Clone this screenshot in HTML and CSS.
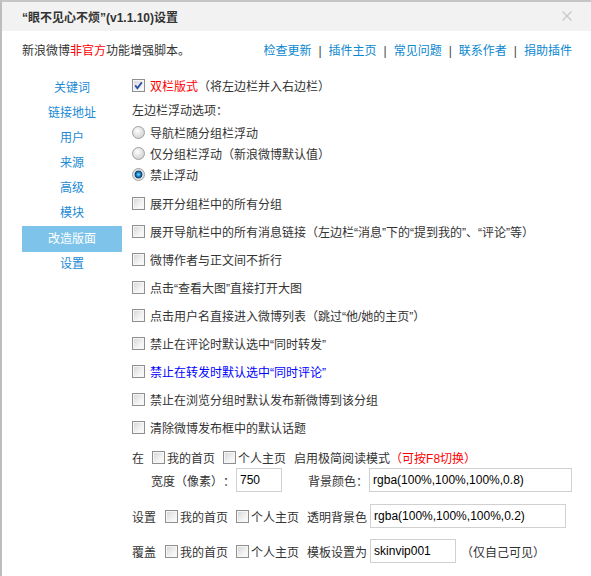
FILE: index.html
```html
<!DOCTYPE html>
<html lang="zh-CN">
<head>
  <meta charset="UTF-8">
  <meta name="viewport" content="width=device-width, initial-scale=1.0">
  <title>“眼不见心不烦”设置</title>
  <link rel="stylesheet" href="styles.css">
</head>
<body>
  <div class="dialog">
    <div class="dialog-head">
      <span class="dialog-title">“眼不见心不烦”(v1.1.10)设置</span>
      <span class="dialog-close">
        <svg width="10" height="10" viewBox="0 0 10 10"><path d="M0.5 0.5L9.5 9.5M9.5 0.5L0.5 9.5" stroke="#c9c9c9" stroke-width="1.4"/></svg>
      </span>
    </div>

    <div class="dialog-intro">
      <span>新浪微博<span class="red">非官方</span>功能增强脚本。</span>
      <span class="links">
        <a href="#">检查更新</a><i>|</i><a href="#">插件主页</a><i>|</i><a href="#">常见问题</a><i>|</i><a href="#">联系作者</a><i>|</i><a href="#">捐助插件</a>
      </span>
    </div>

    <div class="dialog-body">
      <ul class="tabs">
        <li>关键词</li>
        <li>链接地址</li>
        <li>用户</li>
        <li>来源</li>
        <li>高级</li>
        <li>模块</li>
        <li class="current">改造版面</li>
        <li>设置</li>
      </ul>

      <div class="pane">
        <div class="row">
          <span class="box"><svg width="9" height="9" viewBox="0 0 9 9"><path d="M1.2 4.4L3.4 7.2L7.8 1.4" fill="none" stroke="#2b4ea8" stroke-width="1.8"/></svg></span>
          <span class="red">双栏版式</span>（将左边栏并入右边栏）
        </div>

        <div class="caption">左边栏浮动选项：</div>
        <div class="radio-row"><span class="radio"></span>导航栏随分组栏浮动</div>
        <div class="radio-row"><span class="radio"></span>仅分组栏浮动（新浪微博默认值）</div>
        <div class="radio-row"><span class="radio on"></span>禁止浮动</div>

        <div class="group">
          <div class="row"><span class="box"></span>展开分组栏中的所有分组</div>
          <div class="row"><span class="box"></span>展开导航栏中的所有消息链接（左边栏“消息”下的“提到我的”、“评论”等）</div>
          <div class="row"><span class="box"></span>微博作者与正文间不折行</div>
          <div class="row"><span class="box"></span>点击“查看大图”直接打开大图</div>
          <div class="row"><span class="box"></span>点击用户名直接进入微博列表（跳过“他/她的主页”）</div>
          <div class="row"><span class="box"></span>禁止在评论时默认选中“同时转发”</div>
          <div class="row blue"><span class="box"></span>禁止在转发时默认选中“同时评论”</div>
          <div class="row"><span class="box"></span>禁止在浏览分组时默认发布新微博到该分组</div>
          <div class="row"><span class="box"></span>清除微博发布框中的默认话题</div>
        </div>

        <div class="inline-row first">
          <span class="lead">在</span>
          <span class="box"></span><span class="word">我的首页</span>
          <span class="box"></span><span class="word">个人主页</span>
          <span>启用极简阅读模式<span class="red">（可按F8切换）</span></span>
        </div>
        <div class="field-row">
          <span class="indent">宽度（像素）：</span>
          <input type="text" class="field w-46" value="750">
          <span class="tail">背景颜色：</span>
          <input type="text" class="field w-203" value="rgba(100%,100%,100%,0.8)">
        </div>

        <div class="field-row set">
          <span class="lead wide">设置</span>
          <span class="box"></span><span class="word">我的首页</span>
          <span class="box"></span><span class="word">个人主页</span>
          <span class="tail2">透明背景色</span>
          <input type="text" class="field w-196" value="rgba(100%,100%,100%,0.2)">
        </div>

        <div class="field-row cover">
          <span class="lead wide">覆盖</span>
          <span class="box"></span><span class="word">我的首页</span>
          <span class="box"></span><span class="word">个人主页</span>
          <span class="tail2">模板设置为</span>
          <input type="text" class="field w-86" value="skinvip001">
          <span class="note">（仅自己可见）</span>
        </div>
      </div>
    </div>
  </div>
</body>
</html>
```

FILE: styles.css
```css
body {
  margin: 0;
  background: #fff;
  font-family: "Liberation Sans", "Noto Sans CJK SC", sans-serif;
  font-size: 12px;
  color: #333;
  text-spacing-trim: space-all;
}
.dialog {
  height: 576px;
  box-sizing: border-box;
  border-left: 2px solid #bdbdbd;
  border-top: 2px solid #c6c6c6;
  background: #fff;
}
.dialog-head {
  height: 29px;
  background: #f2f2f2;
  display: flex;
  align-items: center;
  justify-content: space-between;
  padding: 0 19px 0 20px;
}
.dialog-title {
  font-weight: bold;
  font-size: 12px;
  color: #333;
}
.dialog-close {
  display: flex;
  margin-top: -2px;
}
.red {
  color: #f00;
}
.blue {
  color: #00f;
}
.dialog-intro {
  display: flex;
  justify-content: space-between;
  padding: 12px 19px 0 20px;
  line-height: 16px;
}
.links a {
  color: #0a87cf;
  text-decoration: none;
}
.links i {
  font-style: normal;
  color: #444;
  margin: 0 7px;
}
.dialog-body {
  display: flex;
  gap: 10px;
  padding: 12px 0 0 20px;
}
.tabs {
  list-style: none;
  margin: 5px 0 0;
  padding: 0;
  width: 100px;
  flex-shrink: 0;
}
.tabs li {
  height: 25px;
  line-height: 25px;
  text-align: center;
  color: #1a8ad4;
}
.tabs li.current {
  height: 26px;
  line-height: 26px;
  background: #7dc3ea;
  color: #fff;
}
.pane {
  flex: 1;
}
.row {
  display: flex;
  align-items: center;
  height: 28px;
  white-space: nowrap;
}
.box {
  width: 13px;
  height: 13px;
  box-sizing: border-box;
  flex-shrink: 0;
  border: 1px solid #8f8f8f;
  background: linear-gradient(135deg, #d4d4d4, #f2f2f2 60%, #fdfdfd);
  box-shadow: inset 0 0 0 1px #f6f6f6;
  display: flex;
  align-items: center;
  justify-content: center;
}
.row .box {
  margin-right: 5px;
}
.caption {
  margin-top: 2px;
  height: 21px;
  line-height: 21px;
}
.radio-row {
  display: flex;
  align-items: center;
  height: 21px;
}
.radio {
  width: 13px;
  height: 13px;
  box-sizing: border-box;
  border-radius: 50%;
  border: 1px solid #a0a0a0;
  background: radial-gradient(circle at 40% 35%, #fff, #e4e4e4 45%, #c8c8c8);
  margin-right: 5px;
}
.radio.on {
  background: radial-gradient(circle, #7fd6ff 0, #1d86cf 2px, #083a68 3.5px, #cfcfcf 4.2px, #ececec 5.5px);
}
.group {
  margin-top: 4px;
}
.inline-row,
.field-row {
  display: flex;
  align-items: center;
  white-space: nowrap;
}
.inline-row.first {
  margin-top: 5px;
  height: 22px;
}
.lead {
  margin-right: 8px;
}
.lead.wide {
  margin-right: 9px;
}
.word {
  margin: 0 8px 0 2px;
}
.field-row {
  height: 24px;
}
.indent {
  margin-left: 19px;
  margin-right: 1px;
}
.tail {
  margin-left: 26px;
  margin-right: 1px;
}
.tail2 {
  margin-right: 3px;
}
.field-row.set {
  margin-top: 12px;
}
.field-row.cover {
  margin-top: 11px;
}
.field {
  height: 24px;
  box-sizing: border-box;
  border: 1px solid #d0d0d0;
  padding: 0 3px;
  font-family: "Liberation Sans", sans-serif;
  font-size: 12px;
  color: #000;
  outline: none;
}
.w-46 { width: 46px; }
.w-203 { width: 203px; }
.w-196 { width: 196px; }
.w-86 { width: 86px; }
.note {
  margin-left: 5px;
}
```
